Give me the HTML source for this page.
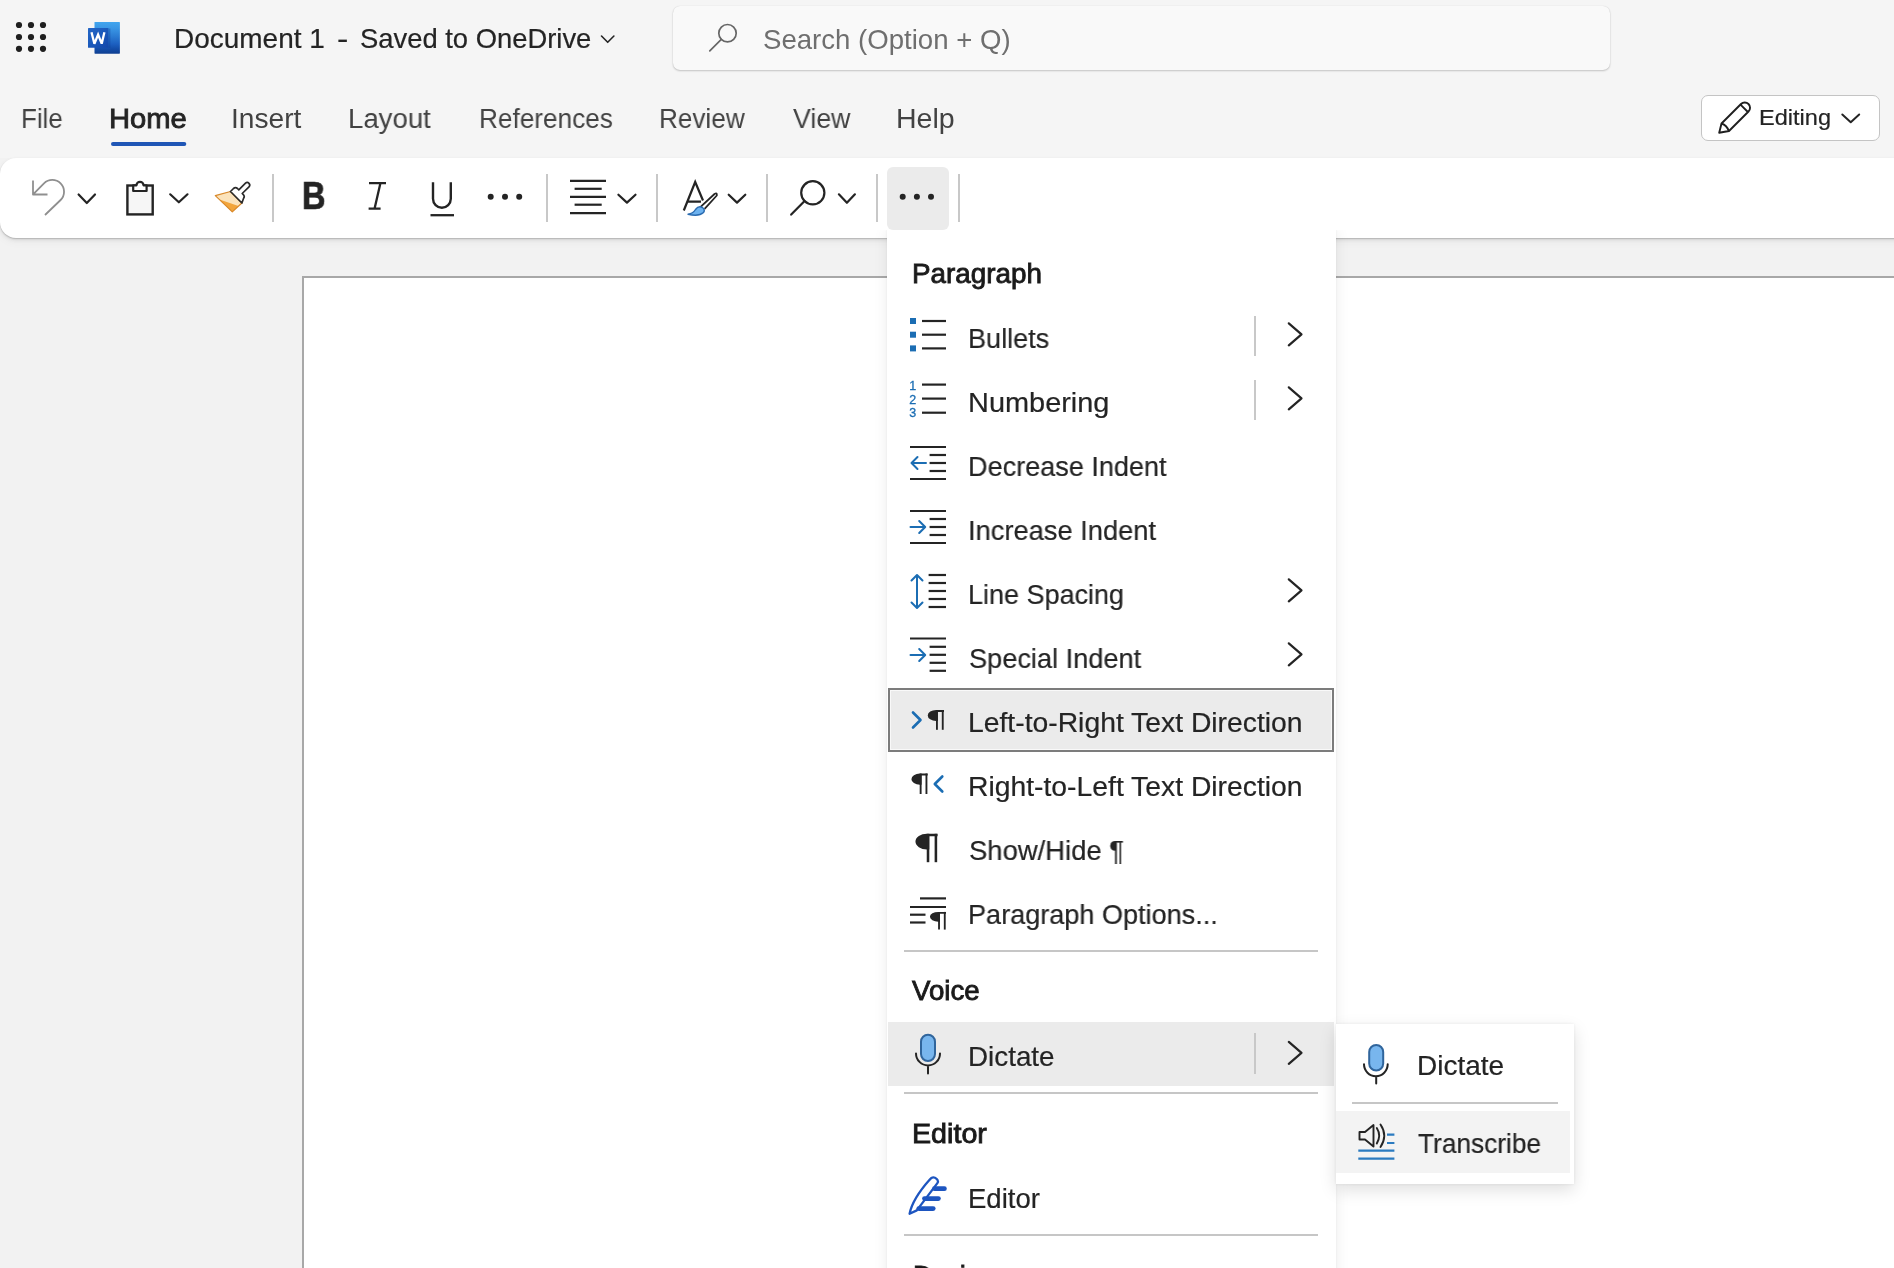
<!DOCTYPE html>
<html><head><meta charset="utf-8">
<style>
*{margin:0;padding:0;box-sizing:border-box}
html,body{width:1894px;height:1268px;overflow:hidden;background:#f2f2f2;font-family:"Liberation Sans",sans-serif;position:relative}
.a{position:absolute}
.t{position:absolute;white-space:nowrap;line-height:1;transform-origin:0 0;will-change:transform}
#hdr{left:0;top:0;width:1894px;height:158px;background:#f5f5f5}
#search{left:673px;top:6px;width:937px;height:64px;background:#f9f9f9;border-radius:7px;box-shadow:0 1px 2px rgba(0,0,0,.2),0 0 1px rgba(0,0,0,.14)}
#tb{left:0;top:158px;width:1910px;height:80px;background:#fff;border-radius:16px 0 0 16px;box-shadow:0 1px 1.5px rgba(0,0,0,.2),0 2px 4px rgba(0,0,0,.07),0 4px 10px rgba(0,0,0,.04)}
#page{left:302px;top:276px;width:1700px;height:1100px;background:#fff;border-top:2px solid #a8a8a8;border-left:2px solid #a8a8a8}
#edit{left:1701px;top:95px;width:179px;height:46px;background:#fff;border:1.5px solid #c4c4c4;border-radius:7px}
.sep{position:absolute;width:2px;background:#c8c8c8}
#menu{left:887px;top:230px;width:449px;height:1060px;background:#fff;clip-path:inset(0 -30px -30px -30px);box-shadow:0 0 2px rgba(0,0,0,.07),0 0 14px rgba(0,0,0,.08)}
#sub{left:1336px;top:1024px;width:238px;height:160px;background:#fff;box-shadow:0 0 3px rgba(0,0,0,.07),0 6px 16px rgba(0,0,0,.13)}
.div{position:absolute;height:2px;background:#c6c6c6}
#ic{position:absolute;left:0;top:0;width:1894px;height:1268px;overflow:visible}
</style></head><body>
<div id="hdr" class="a"></div>
<div id="search" class="a"></div>
<div id="tb" class="a"></div>
<div class="a" style="left:887px;top:166.5px;width:61.5px;height:63px;background:#ebebeb;border-radius:6px"></div>
<div class="sep" style="left:271.6px;top:174px;height:48px"></div>
<div class="sep" style="left:546.3px;top:174px;height:48px"></div>
<div class="sep" style="left:655.9px;top:174px;height:48px"></div>
<div class="sep" style="left:765.6px;top:174px;height:48px"></div>
<div class="sep" style="left:876px;top:174px;height:48px"></div>
<div class="sep" style="left:958px;top:174px;height:48px"></div>
<div id="page" class="a"></div>
<div id="edit" class="a"></div>
<div id="menu" class="a"></div>
<div class="a" style="left:888px;top:688px;width:446px;height:64px;background:#ebebeb;border:2px solid #7c7c7c;box-shadow:inset 0 0 0 1px rgba(255,255,255,.7)"></div>
<div class="a" style="left:888px;top:1022px;width:446px;height:64px;background:#ebebeb"></div>
<div class="sep" style="left:1254px;top:316px;height:40px"></div>
<div class="sep" style="left:1254px;top:380px;height:40px"></div>
<div class="sep" style="left:1254px;top:1033px;height:41px"></div>
<div class="div" style="left:904px;top:950px;width:414px"></div>
<div class="div" style="left:904px;top:1092px;width:414px"></div>
<div class="div" style="left:904px;top:1234px;width:414px"></div>
<div id="sub" class="a"></div>
<div class="a" style="left:1336px;top:1110.5px;width:234px;height:62px;background:#f3f3f3"></div>
<div class="div" style="left:1352px;top:1102px;width:206px"></div>
<div class="t" style="left:173.73px;top:26.11px;font-size:27.03px;color:#242424;-webkit-text-stroke:0.2px #242424;transform:scaleX(1.0355)">Document 1</div>
<div class="t" style="left:337.44px;top:26.11px;font-size:27.03px;color:#242424;-webkit-text-stroke:0.2px #242424;transform:scaleX(1.2571)">-</div>
<div class="t" style="left:360.49px;top:26.11px;font-size:27.03px;color:#242424;-webkit-text-stroke:0.2px #242424;transform:scaleX(1.0136)">Saved to OneDrive</div>
<div class="t" style="left:763.00px;top:25.54px;font-size:27.47px;color:#6f6f6f;transform:scaleX(1.0044)">Search (Option + Q)</div>
<div class="t" style="left:21.43px;top:105.30px;font-size:27.76px;color:#424242;transform:scaleX(0.9342)">File</div>
<div class="t" style="left:108.90px;top:105.30px;font-size:27.76px;color:#242424;-webkit-text-stroke:0.85px #242424;transform:scaleX(1.0518)">Home</div>
<div class="t" style="left:230.97px;top:105.30px;font-size:27.76px;color:#424242;transform:scaleX(1.0134)">Insert</div>
<div class="t" style="left:347.71px;top:105.30px;font-size:27.76px;color:#424242;transform:scaleX(0.9938)">Layout</div>
<div class="t" style="left:478.71px;top:105.30px;font-size:27.76px;color:#424242;transform:scaleX(0.9437)">References</div>
<div class="t" style="left:658.72px;top:105.30px;font-size:27.76px;color:#424242;transform:scaleX(0.9417)">Review</div>
<div class="t" style="left:792.60px;top:105.30px;font-size:27.76px;color:#424242;transform:scaleX(0.9636)">View</div>
<div class="t" style="left:896.14px;top:105.30px;font-size:27.76px;color:#424242;transform:scaleX(1.0286)">Help</div>
<div class="t" style="left:1759.15px;top:107.42px;font-size:22.53px;color:#242424;-webkit-text-stroke:0.2px #242424;transform:scaleX(1.0457)">Editing</div>
<div class="t" style="left:302.19px;top:177.03px;font-size:38.23px;color:#242424;font-weight:bold;-webkit-text-stroke:0.7px #242424;transform:scaleX(0.8542)">B</div>
<div class="t" style="left:912.17px;top:259.54px;font-size:27.47px;color:#1a1a1a;-webkit-text-stroke:0.85px #1a1a1a;transform:scaleX(1.0128)">Paragraph</div>
<div class="t" style="left:912.30px;top:977.21px;font-size:27.62px;color:#1a1a1a;-webkit-text-stroke:0.85px #1a1a1a;transform:scaleX(1.0017)">Voice</div>
<div class="t" style="left:912.09px;top:1119.99px;font-size:27.18px;color:#1a1a1a;-webkit-text-stroke:0.85px #1a1a1a;transform:scaleX(1.0547)">Editor</div>
<div class="t" style="left:912.68px;top:1261.54px;font-size:27.47px;color:#1a1a1a;-webkit-text-stroke:0.85px #1a1a1a;transform:scaleX(0.9607)">Design</div>
<div class="t" style="left:968.06px;top:324.67px;font-size:27.91px;color:#242424;-webkit-text-stroke:0.2px #242424;transform:scaleX(0.9702)">Bullets</div>
<div class="t" style="left:967.93px;top:388.67px;font-size:27.91px;color:#242424;-webkit-text-stroke:0.2px #242424;transform:scaleX(1.0363)">Numbering</div>
<div class="t" style="left:968.06px;top:452.67px;font-size:27.91px;color:#242424;-webkit-text-stroke:0.2px #242424;transform:scaleX(0.9694)">Decrease Indent</div>
<div class="t" style="left:968.04px;top:516.67px;font-size:27.91px;color:#242424;-webkit-text-stroke:0.2px #242424;transform:scaleX(0.9779)">Increase Indent</div>
<div class="t" style="left:968.07px;top:580.67px;font-size:27.91px;color:#242424;-webkit-text-stroke:0.2px #242424;transform:scaleX(0.9668)">Line Spacing</div>
<div class="t" style="left:969.03px;top:644.67px;font-size:27.91px;color:#242424;-webkit-text-stroke:0.2px #242424;transform:scaleX(0.9738)">Special Indent</div>
<div class="t" style="left:967.97px;top:708.67px;font-size:27.91px;color:#242424;-webkit-text-stroke:0.2px #242424;transform:scaleX(1.0143)">Left-to-Right Text Direction</div>
<div class="t" style="left:967.97px;top:772.67px;font-size:27.91px;color:#242424;-webkit-text-stroke:0.2px #242424;transform:scaleX(1.0143)">Right-to-Left Text Direction</div>
<div class="t" style="left:969.02px;top:836.67px;font-size:27.91px;color:#242424;-webkit-text-stroke:0.2px #242424;transform:scaleX(0.9826)">Show/Hide ¶</div>
<div class="t" style="left:968.06px;top:900.67px;font-size:27.91px;color:#242424;-webkit-text-stroke:0.2px #242424;transform:scaleX(0.9702)">Paragraph Options...</div>
<div class="t" style="left:967.96px;top:1042.76px;font-size:27.33px;color:#242424;-webkit-text-stroke:0.2px #242424;transform:scaleX(1.0177)">Dictate</div>
<div class="t" style="left:967.99px;top:1184.86px;font-size:27.33px;color:#242424;-webkit-text-stroke:0.2px #242424;transform:scaleX(1.0074)">Editor</div>
<div class="t" style="left:1416.52px;top:1052.73px;font-size:26.89px;color:#242424;-webkit-text-stroke:0.2px #242424;transform:scaleX(1.0409)">Dictate</div>
<div class="t" style="left:1417.50px;top:1130.34px;font-size:27.47px;color:#242424;-webkit-text-stroke:0.2px #242424;transform:scaleX(0.9552)">Transcribe</div>
<svg id="ic" width="1894" height="1268" viewBox="0 0 1894 1268">
<circle cx="19" cy="25" r="3.1" fill="#1f1f1f"/>
<circle cx="19" cy="37" r="3.1" fill="#1f1f1f"/>
<circle cx="19" cy="48.8" r="3.1" fill="#1f1f1f"/>
<circle cx="31" cy="25" r="3.1" fill="#1f1f1f"/>
<circle cx="31" cy="37" r="3.1" fill="#1f1f1f"/>
<circle cx="31" cy="48.8" r="3.1" fill="#1f1f1f"/>
<circle cx="43" cy="25" r="3.1" fill="#1f1f1f"/>
<circle cx="43" cy="37" r="3.1" fill="#1f1f1f"/>
<circle cx="43" cy="48.8" r="3.1" fill="#1f1f1f"/>
<defs><linearGradient id="wg" x1="0" y1="0" x2="0" y2="1">
<stop offset="0" stop-color="#41a5ee"/><stop offset="0.18" stop-color="#3b98e6"/><stop offset="0.45" stop-color="#2b7cd3"/><stop offset="0.7" stop-color="#1c5fc0"/><stop offset="0.85" stop-color="#134da8"/><stop offset="1" stop-color="#103f91"/></linearGradient>
<linearGradient id="wf" x1="0" y1="0" x2="1" y2="1"><stop offset="0" stop-color="#2466c6"/><stop offset="0.5" stop-color="#1a59bb"/><stop offset="1" stop-color="#1247aa"/></linearGradient></defs>
<rect x="94.5" y="22" width="25.4" height="31.7" rx="0.6" fill="url(#wg)"/>
<rect x="108.4" y="28.5" width="2" height="19.3" fill="#0f3f8f" opacity="0.35"/>
<rect x="88" y="28" width="20.4" height="19.8" rx="0.6" fill="url(#wf)"/>
<path d="M91.5,32.3 L94.4,43.7 L98.1,34.6 L101.7,43.7 L104.4,32.3" fill="none" stroke="#fff" stroke-width="2.3" stroke-linejoin="miter" stroke-miterlimit="3"/>
<path d="M601.5,36 L607.7,42.3 L613.9,36" fill="none" stroke="#242424" stroke-width="1.6" stroke-linecap="round" stroke-linejoin="round"/>
<circle cx="727.5" cy="33.2" r="8.7" fill="none" stroke="#666" stroke-width="1.7"/><line x1="721.3" y1="39.4" x2="709.8" y2="50.8" stroke="#666" stroke-width="1.7" stroke-linecap="round"/>
<rect x="111" y="142" width="75.3" height="4" rx="2" fill="#1f56b6"/>
<path d="M1719.2,132.8 L1721.5,123.5 L1741,104 A5.3,5.3 0 0 1 1748.5,111.5 L1729,131 Z M1721.5,123.5 Q1726.8,125.3 1728.8,131 M1740.5,104.6 L1747.9,112" fill="none" stroke="#1f1f1f" stroke-width="1.9" stroke-linejoin="round"/>
<path d="M1842.3,114.5 L1850.75,122.2 L1859.2,114.5" fill="none" stroke="#242424" stroke-width="2.0" stroke-linecap="round" stroke-linejoin="round"/>
<path d="M33,180.5 V194.5 H47.5 M33.6,193.8 L44,183.4 A11.7,11.7 0 0 1 60.6,200 L45,215" fill="none" stroke="#8f8f8f" stroke-width="1.8" stroke-linejoin="round"/>
<path d="M78.6,194.5 L86.8,203 L95,194.5" fill="none" stroke="#242424" stroke-width="2.2" stroke-linecap="round" stroke-linejoin="round"/>
<rect x="127.4" y="185.5" width="25.3" height="28.9" fill="#f6f6f6" stroke="#242424" stroke-width="2.4"/>
<path d="M133.2,191 V185.3 H136.5 A3.5,3.5 0 0 1 143.5,185.3 H146.6 V191 Z" fill="#fff" stroke="#242424" stroke-width="2.2" stroke-linejoin="round"/>
<path d="M170.2,194.3 L178.85,202.3 L187.5,194.3" fill="none" stroke="#242424" stroke-width="2.2" stroke-linecap="round" stroke-linejoin="round"/>
<path d="M215.3,195.6 L230.5,191.5 L241.9,203 L232.3,211.9 Z" fill="#fbe3bb"/>
<path d="M219.5,199.5 L238.5,206 L232.3,211.9 Z" fill="#f2a53c"/>
<path d="M215.3,195.6 L230.5,191.5 L241.9,203 L232.3,211.9 Z" fill="none" stroke="#d9892b" stroke-width="1.2" stroke-linejoin="round"/>
<path d="M230.5,191.5 L233.5,188.5 Q235.5,186.8 237.5,188.5 L238.8,189.8 L245.5,183.2 Q247.3,181.6 249,183.4 Q250.6,185.2 249,186.8 L242.2,193.5 L243.5,194.8 Q245,196.6 243.5,198.5 L241.9,203 Z" fill="#fff" stroke="#2b2b2b" stroke-width="1.7" stroke-linejoin="round"/>
<path d="M369,183.2 H386 M368.6,208.6 H380.6 M380.4,183.2 L374.6,208.6" fill="none" stroke="#242424" stroke-width="2.3"/>
<path d="M433,182.3 V198.8 A8.9,8.9 0 0 0 450.8,198.8 V182.3" fill="none" stroke="#242424" stroke-width="2.4"/>
<line x1="430.5" y1="215.2" x2="454" y2="215.2" stroke="#242424" stroke-width="2.3"/>
<circle cx="490.7" cy="196.7" r="3" fill="#242424"/>
<circle cx="505" cy="196.7" r="3" fill="#242424"/>
<circle cx="519.2" cy="196.7" r="3" fill="#242424"/>
<line x1="570" y1="180.9" x2="606" y2="180.9" stroke="#242424" stroke-width="2.2"/>
<line x1="574.6" y1="188.8" x2="601.7" y2="188.8" stroke="#242424" stroke-width="2.2"/>
<line x1="570" y1="196.9" x2="606" y2="196.9" stroke="#242424" stroke-width="2.2"/>
<line x1="574.6" y1="204.7" x2="601.7" y2="204.7" stroke="#242424" stroke-width="2.2"/>
<line x1="570" y1="213.1" x2="606" y2="213.1" stroke="#242424" stroke-width="2.2"/>
<path d="M618.4,194.7 L626.95,202.6 L635.5,194.7" fill="none" stroke="#242424" stroke-width="2.2" stroke-linecap="round" stroke-linejoin="round"/>
<path d="M683.8,210.5 L695.2,182 L703,200.5 M688,201.6 H701" fill="none" stroke="#242424" stroke-width="2.2" stroke-linejoin="miter"/>
<path d="M700.3,207.2 L714.5,194 Q717.3,192.5 716.8,195.5 L704.6,208.8" fill="#fff" stroke="#242424" stroke-width="1.8" stroke-linejoin="round"/>
<path d="M688,214.2 Q693,213.5 695.5,209.5 Q698.5,205.5 702.5,207.5 Q705.5,209.8 703.5,212.5 Q699,216.8 688,214.2 Z" fill="#6db2ef" stroke="#2a6bb0" stroke-width="1.4" stroke-linejoin="round"/>
<path d="M728.7,194.7 L737.0,202.6 L745.3,194.7" fill="none" stroke="#242424" stroke-width="2.2" stroke-linecap="round" stroke-linejoin="round"/>
<circle cx="812.8" cy="192.8" r="11.6" fill="none" stroke="#242424" stroke-width="2.2"/><line x1="804.6" y1="201" x2="791.2" y2="214.6" stroke="#242424" stroke-width="2.2" stroke-linecap="round"/>
<path d="M838.9,194.3 L846.9,202.8 L854.9,194.3" fill="none" stroke="#242424" stroke-width="2.2" stroke-linecap="round" stroke-linejoin="round"/>
<circle cx="902.7" cy="196.8" r="3" fill="#242424"/>
<circle cx="916.9" cy="196.8" r="3" fill="#242424"/>
<circle cx="931" cy="196.8" r="3" fill="#242424"/>
<rect x="910" y="318" width="6" height="6" fill="#1b6db3"/>
<line x1="922" y1="321" x2="946" y2="321" stroke="#242424" stroke-width="2.2"/>
<rect x="910" y="331.7" width="6" height="6" fill="#1b6db3"/>
<line x1="922" y1="334.7" x2="946" y2="334.7" stroke="#242424" stroke-width="2.2"/>
<rect x="910" y="345.4" width="6" height="6" fill="#1b6db3"/>
<line x1="922" y1="348.4" x2="946" y2="348.4" stroke="#242424" stroke-width="2.2"/>
<g font-family="Liberation Sans" font-size="12.5" fill="#1b6db3" stroke="#1b6db3" stroke-width="0.3"><text x="909.3" y="390">1</text><text x="909.3" y="403.8">2</text><text x="909.3" y="417">3</text></g>
<line x1="922" y1="384.6" x2="946" y2="384.6" stroke="#242424" stroke-width="2.2"/>
<line x1="922" y1="398.6" x2="946" y2="398.6" stroke="#242424" stroke-width="2.2"/>
<line x1="922" y1="412.7" x2="946" y2="412.7" stroke="#242424" stroke-width="2.2"/>
<line x1="910" y1="447" x2="946" y2="447" stroke="#242424" stroke-width="2.2"/>
<line x1="910" y1="479" x2="946" y2="479" stroke="#242424" stroke-width="2.2"/>
<line x1="929.6" y1="455" x2="946" y2="455" stroke="#242424" stroke-width="2.2"/>
<line x1="929.6" y1="463" x2="946" y2="463" stroke="#242424" stroke-width="2.2"/>
<line x1="929.6" y1="471" x2="946" y2="471" stroke="#242424" stroke-width="2.2"/>
<path d="M926,463 H912 M917.5,457 L911.5,463 L917.5,469" fill="none" stroke="#1b6db3" stroke-width="2" stroke-linejoin="round" stroke-linecap="round"/>
<line x1="910" y1="511" x2="946" y2="511" stroke="#242424" stroke-width="2.2"/>
<line x1="910" y1="543" x2="946" y2="543" stroke="#242424" stroke-width="2.2"/>
<line x1="929.6" y1="519" x2="946" y2="519" stroke="#242424" stroke-width="2.2"/>
<line x1="929.6" y1="527" x2="946" y2="527" stroke="#242424" stroke-width="2.2"/>
<line x1="929.6" y1="535" x2="946" y2="535" stroke="#242424" stroke-width="2.2"/>
<path d="M910.5,527 H925 M919.2,521 L925.2,527 L919.2,533" fill="none" stroke="#1b6db3" stroke-width="2" stroke-linejoin="round" stroke-linecap="round"/>
<line x1="928.6" y1="575" x2="946" y2="575" stroke="#242424" stroke-width="2.2"/>
<line x1="928.6" y1="583" x2="946" y2="583" stroke="#242424" stroke-width="2.2"/>
<line x1="928.6" y1="591" x2="946" y2="591" stroke="#242424" stroke-width="2.2"/>
<line x1="928.6" y1="599" x2="946" y2="599" stroke="#242424" stroke-width="2.2"/>
<line x1="928.6" y1="607" x2="946" y2="607" stroke="#242424" stroke-width="2.2"/>
<path d="M917,575.5 V607.5 M911.5,580.5 L917,575 L922.5,580.5 M911.5,602.5 L917,608 L922.5,602.5" fill="none" stroke="#1b6db3" stroke-width="2" stroke-linejoin="round" stroke-linecap="round"/>
<line x1="910" y1="638.5" x2="946" y2="638.5" stroke="#242424" stroke-width="2.2"/>
<line x1="929.6" y1="646.8" x2="946" y2="646.8" stroke="#242424" stroke-width="2.2"/>
<line x1="929.6" y1="654.8" x2="946" y2="654.8" stroke="#242424" stroke-width="2.2"/>
<line x1="929.6" y1="662.8" x2="946" y2="662.8" stroke="#242424" stroke-width="2.2"/>
<line x1="929.6" y1="670.8" x2="946" y2="670.8" stroke="#242424" stroke-width="2.2"/>
<path d="M910.5,655 H925 M919.2,649 L925.2,655 L919.2,661" fill="none" stroke="#1b6db3" stroke-width="2" stroke-linejoin="round" stroke-linecap="round"/>
<path d="M913,712.5 L920.5,720 L913,727.5" fill="none" stroke="#1b6db3" stroke-width="2.6" stroke-linejoin="round" stroke-linecap="round"/>
<path d="M937.877,710 H944 V711.884 H937.877 V720.89 L936.193,720.89 A8.46229999999999,5.444999999999988 0 0 1 936.193,710 Z" fill="#242424"/><line x1="936.935" y1="710" x2="936.935" y2="729.8" stroke="#242424" stroke-width="1.8840000000000054"/><line x1="942.744" y1="710" x2="942.744" y2="729.8" stroke="#242424" stroke-width="1.8840000000000054"/>
<path d="M921.577,773.5 H927.7 V775.384 H921.577 V784.775 L919.893,784.775 A8.46229999999999,5.6375 0 0 1 919.893,773.5 Z" fill="#242424"/><line x1="920.635" y1="773.5" x2="920.635" y2="794" stroke="#242424" stroke-width="1.8840000000000054"/><line x1="926.4440000000001" y1="773.5" x2="926.4440000000001" y2="794" stroke="#242424" stroke-width="1.8840000000000054"/>
<path d="M942.3,776.5 L934.8,784 L942.3,791.5" fill="none" stroke="#1b6db3" stroke-width="2.6" stroke-linejoin="round" stroke-linecap="round"/>
<path d="M929.293,833.8 H937.6 V836.356 H929.293 V849.42 L926.937,849.42 A11.48070000000003,7.810000000000025 0 0 1 926.937,833.8 Z" fill="#242424"/><line x1="928.015" y1="833.8" x2="928.015" y2="862.2" stroke="#242424" stroke-width="2.556000000000008"/><line x1="935.896" y1="833.8" x2="935.896" y2="862.2" stroke="#242424" stroke-width="2.556000000000008"/>
<line x1="920" y1="898.4" x2="946" y2="898.4" stroke="#242424" stroke-width="2.2"/>
<line x1="910" y1="907" x2="946" y2="907" stroke="#242424" stroke-width="2.2"/>
<line x1="910" y1="914.7" x2="925.5" y2="914.7" stroke="#242424" stroke-width="2.2"/>
<line x1="910" y1="922.5" x2="925.5" y2="922.5" stroke="#242424" stroke-width="2.2"/>
<path d="M939.9549999999999,911.9 H946 V913.76 H939.9549999999999 V921.635 L938.2950000000001,921.635 A8.354499999999977,4.867500000000013 0 0 1 938.2950000000001,911.9 Z" fill="#242424"/><line x1="939.025" y1="911.9" x2="939.025" y2="929.6" stroke="#242424" stroke-width="1.8599999999999999"/><line x1="944.7600000000001" y1="911.9" x2="944.7600000000001" y2="929.6" stroke="#242424" stroke-width="1.8599999999999999"/>
<rect x="921" y="1034.7" width="14" height="26.299999999999955" rx="7" fill="#78b6ee" stroke="#30659c" stroke-width="2"/><path d="M916,1053.4 A12.0,12.0 0 0 0 940,1053.4 M928,1066.8 V1073.5" fill="none" stroke="#242424" stroke-width="2" stroke-linecap="round"/>
<path d="M909.6,1213.8 Q912.5,1199 929.8,1179.6 L931.3,1178 Q934,1176.6 936.6,1178.8 L937.6,1180.2 Q938.6,1181.8 937.2,1183.4 L916.8,1210.4 Q912.6,1212.4 909.6,1213.8 Z" fill="#fff" stroke="#1d55c0" stroke-width="2.3" stroke-linejoin="round"/>
<line x1="934.5" y1="1188.7" x2="944.4" y2="1188.7" stroke="#1d55c0" stroke-width="4.8" stroke-linecap="round"/>
<line x1="924.5" y1="1198.6" x2="938.4" y2="1198.6" stroke="#1d55c0" stroke-width="4.8" stroke-linecap="round"/>
<line x1="918.8" y1="1208.6" x2="933.2" y2="1208.6" stroke="#1d55c0" stroke-width="4.8" stroke-linecap="round"/>
<path d="M1288.8,323.3 L1301.5,334.3 L1288.8,345.3" fill="none" stroke="#242424" stroke-width="2.2" stroke-linecap="round" stroke-linejoin="round"/>
<path d="M1288.8,387.3 L1301.5,398.3 L1288.8,409.3" fill="none" stroke="#242424" stroke-width="2.2" stroke-linecap="round" stroke-linejoin="round"/>
<path d="M1288.8,579.3 L1301.5,590.3 L1288.8,601.3" fill="none" stroke="#242424" stroke-width="2.2" stroke-linecap="round" stroke-linejoin="round"/>
<path d="M1288.8,643.3 L1301.5,654.3 L1288.8,665.3" fill="none" stroke="#242424" stroke-width="2.2" stroke-linecap="round" stroke-linejoin="round"/>
<path d="M1288.8,1041.9 L1301.5,1052.9 L1288.8,1063.9" fill="none" stroke="#242424" stroke-width="2.2" stroke-linecap="round" stroke-linejoin="round"/>
<rect x="1369.2" y="1045" width="14" height="25.59999999999991" rx="7" fill="#78b6ee" stroke="#30659c" stroke-width="2"/><path d="M1364,1064.3 A11.850000000000023,11.850000000000023 0 0 0 1387.7,1064.3 M1376.2,1077.3 V1083.5" fill="none" stroke="#242424" stroke-width="2" stroke-linecap="round"/>
<path d="M1359.5,1132 H1365 L1373.5,1125 V1146.5 L1365,1139.5 H1359.5 Z M1376.8,1128 Q1381.5,1135.5 1376.8,1143.5 M1380.5,1124.5 Q1388,1135.5 1380.5,1147" fill="none" stroke="#242424" stroke-width="1.9" stroke-linejoin="round" stroke-linecap="round"/>
<path d="M1387,1134.7 H1394.4 M1387,1143 H1394.4 M1358.3,1150.6 H1394.4 M1358.3,1158.7 H1394.4" fill="none" stroke="#2b7bc0" stroke-width="2.2"/>
</svg>
</body></html>
